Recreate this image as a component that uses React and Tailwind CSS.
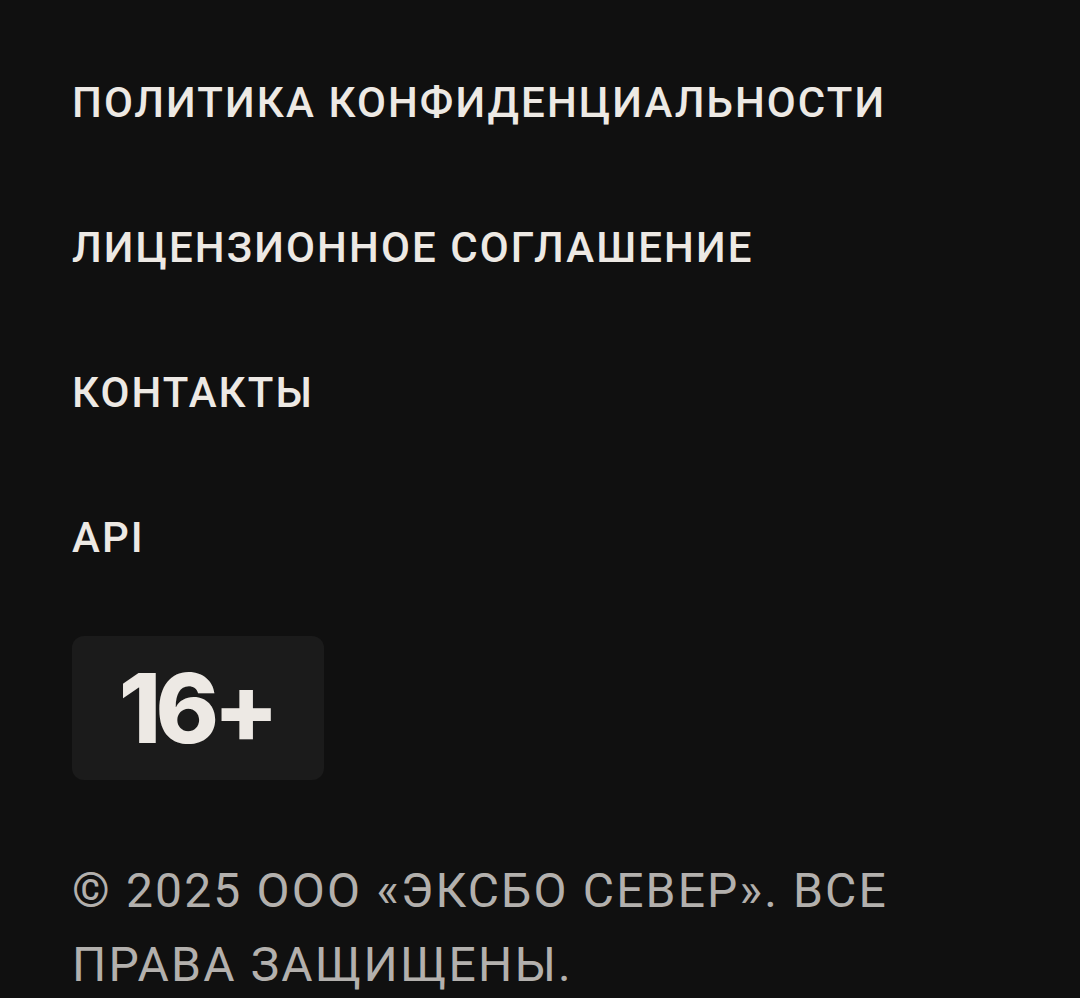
import React from 'react';

const links = [
  'ПОЛИТИКА КОНФИДЕНЦИАЛЬНОСТИ',
  'ЛИЦЕНЗИОННОЕ СОГЛАШЕНИЕ',
  'КОНТАКТЫ',
  'API',
];

export default function App() {
  return (
    <div className="min-h-[998px] bg-[#101010] px-[72px] pt-[76px] font-['Roboto',sans-serif]">
      {/* Footer links */}
      <nav className="flex flex-col">
        {links.map((label) => (
          <a
            key={label}
            href="#"
            className="h-[145px] text-[42px] leading-[54px] font-medium tracking-[0.05em] text-[#ede9e4]"
          >
            {label}
          </a>
        ))}
      </nav>

      {/* Age rating */}
      <div className="-mt-[20px] flex h-[144px] w-[252px] items-center justify-center rounded-[12px] bg-[#1b1b1b]">
        <span className="pr-[4px] font-['Inter',sans-serif] text-[96px] leading-none font-extrabold tracking-[-0.06em] text-[#ede9e4]">
          16+
        </span>
      </div>

      <p className="mt-[74px] text-[48px] leading-[74px] tracking-[0.045em] text-[#b3b0ad]">
        © 2025 ООО «ЭКСБО СЕВЕР». ВСЕ ПРАВА ЗАЩИЩЕНЫ.
      </p>
    </div>
  );
}
